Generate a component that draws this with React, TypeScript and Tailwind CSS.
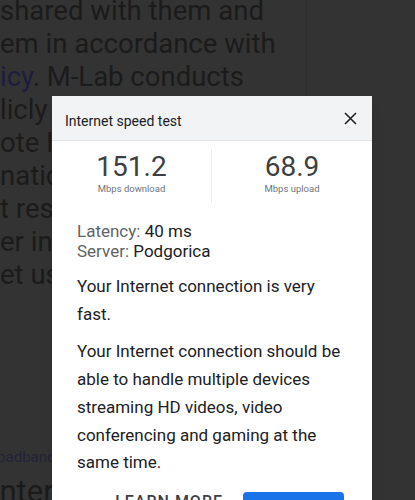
export default function App() {
  const bgLines = [
    { t: 'shared with them and' },
    { t: 'em in accordance with' },
    { t: 'icy', link: true, rest: '. M-Lab conducts' },
    { t: 'licly publishes all' },
    { t: 'ote Internet' },
    { t: 'nation includes' },
    { t: 't results, but' },
    { t: 'er information' },
    { t: 'et user.' },
  ]

  return (
    <div className="relative h-[500px] w-[415px] overflow-hidden bg-[#333333] font-['Roboto',sans-serif]">
      {/* Dimmed page behind the dialog */}
      <div className="flex h-full">
        <div className="w-[307px] border-r border-[#2e2e2e]">
          <div className="-mt-[6px] text-[27.5px] leading-[33px] text-[#1b1b1b]">
            {bgLines.map((l, i) => (
              <div key={i} className="whitespace-nowrap">
                {l.link ? (
                  <>
                    <span className="text-[#1d1d3d]">{l.t}</span>
                    {l.rest}
                  </>
                ) : (
                  l.t
                )}
              </div>
            ))}
          </div>
          <div className="-ml-[3px] mt-[156px] whitespace-nowrap text-[15px] leading-[20px] text-[#22223a]">oadband</div>
          <div className="-ml-[9px] mt-[8px] whitespace-nowrap text-[31px] leading-[34px] text-[#1b1b1b]">Internet</div>
        </div>
      </div>

      {/* Dialog */}
      <div className="absolute left-[52px] top-[96px] w-[320px] bg-white shadow-lg">
        <div className="flex h-[45px] items-center justify-between border-b border-[#e4e4e4] bg-[#f1f3f4] pl-[13px] pr-[15px]">
          <span className="mt-[6px] text-[14px] text-[#202124]">Internet speed test</span>
          <svg width="13" height="13" viewBox="0 0 13 13" className="text-[#202124]">
            <path d="M1 1 L12 12 M12 1 L1 12" stroke="currentColor" strokeWidth="1.6" fill="none" />
          </svg>
        </div>

        <div className="grid grid-cols-2 py-[8px]">
          <div className="flex flex-col items-center border-r border-[#ececec] pb-[8px]">
            <span className="text-[28px] leading-[36px] text-[#3c4043]">151.2</span>
            <span className="-mt-[2px] text-[9.5px] leading-[12px] text-[#70757a]">Mbps download</span>
          </div>
          <div className="flex flex-col items-center pb-[8px]">
            <span className="text-[28px] leading-[36px] text-[#3c4043]">68.9</span>
            <span className="-mt-[2px] text-[9.5px] leading-[12px] text-[#70757a]">Mbps upload</span>
          </div>
        </div>

        <div className="px-[25px] pt-[10px] text-[17px] text-[#202124]">
          <div className="leading-[20px]">
            <div>
              <span className="text-[#5f6368]">Latency: </span>40 ms
            </div>
            <div>
              <span className="text-[#5f6368]">Server: </span>Podgorica
            </div>
          </div>
          <p className="mt-[12px] leading-[27.7px]">Your Internet connection is very fast.</p>
          <p className="mt-[10px] leading-[27.7px]">
            Your Internet connection should be able to handle multiple devices streaming HD videos, video conferencing and gaming at the same time.
          </p>
        </div>

        <div className="flex items-start justify-end gap-[20px] px-[28px] pt-[15px] pb-[10px]">
          <button className="text-[16px] font-medium leading-[20px] tracking-[1px] text-[#3c4043]">LEARN MORE</button>
          <button className="h-[36px] w-[101px] rounded-[4px] bg-[#1a73e8] text-[16px] font-medium tracking-[0.6px] text-white">
            TEST AGAIN
          </button>
        </div>
      </div>
    </div>
  )
}
